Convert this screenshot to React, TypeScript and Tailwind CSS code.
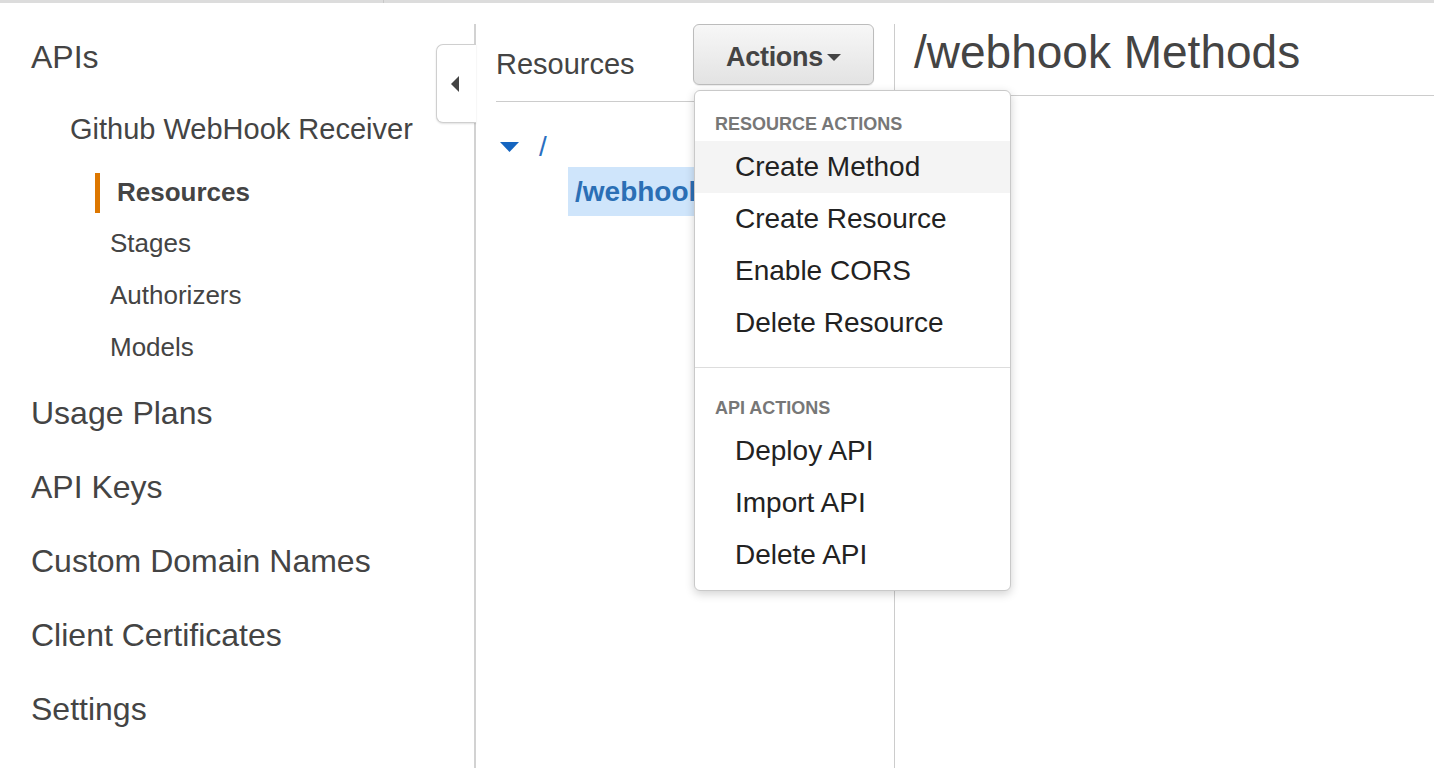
import React from "react";

const font = { fontFamily: '"Liberation Sans", Arial, Helvetica, sans-serif' };

function SubItem({ label }: { label: string }) {
  return (
    <div className="h-[52px] flex items-center pl-[110px] text-[26px] text-[#444]">{label}</div>
  );
}

function MainItem({ label }: { label: string }) {
  return (
    <div className="h-[74px] flex items-center pl-[31px] text-[32px] text-[#444]">{label}</div>
  );
}

function MenuItem({ label, active }: { label: string; active?: boolean }) {
  return (
    <div
      className={`h-[52px] flex items-center pl-[40px] text-[28px] text-[#222] ${
        active ? "bg-[#f4f4f4]" : ""
      }`}
    >
      {label}
    </div>
  );
}

function MenuHeader({ label }: { label: string }) {
  return (
    <div className="h-[34px] flex items-center pl-[20px] text-[18px] font-bold text-[#777]">
      {label}
    </div>
  );
}

export default function App() {
  return (
    <div className="w-[1434px] h-[768px] bg-white overflow-hidden flex flex-col" style={font}>
      <div className="h-[3px] bg-[#dcdcdc] flex">
        <div className="w-[384px] border-r border-[#c8c8c8]" />
      </div>
      <div className="flex flex-1 pt-[21px]">
        {/* Sidebar */}
        <div className="relative w-[476px] border-r-2 border-[#d2d2d2] pt-[6px]">
          <div className="h-[54px] flex items-center pl-[31px] text-[32px] text-[#444]">APIs</div>
          <div className="mt-[22px] h-[48px] flex items-center pl-[70px] text-[29px] text-[#444]">
            Github WebHook Receiver
          </div>
          <div className="mt-[14px] h-[49px] flex items-center pl-[95px]">
            <div className="w-[5px] h-[40px] bg-[#dd7700]" />
            <div className="ml-[17px] text-[26px] font-bold text-[#444]">Resources</div>
          </div>
          <SubItem label="Stages" />
          <SubItem label="Authorizers" />
          <SubItem label="Models" />
          <div className="mt-[3px]">
            <MainItem label="Usage Plans" />
            <MainItem label="API Keys" />
            <MainItem label="Custom Domain Names" />
            <MainItem label="Client Certificates" />
            <MainItem label="Settings" />
          </div>
          {/* collapse tab */}
          <div className="absolute right-[-2px] top-[20px] w-[40px] h-[79px] border border-r-0 border-[#cfcfcf] rounded-l-[7px] bg-white shadow-[0_1px_2px_rgba(0,0,0,0.12)] flex items-center justify-center">
            <svg width="10" height="16" viewBox="0 0 10 16" className="ml-[-3px]">
              <polygon points="9,0 9,16 1,8" fill="#444" />
            </svg>
          </div>
        </div>

        {/* Middle panel */}
        <div className="w-[419px] border-r border-[#cccccc] pl-[20px] pr-[20px]">
          <div className="h-[78px] border-b border-[#cccccc] flex items-start">
            <div className="mt-[23px] leading-[34px] text-[29px] text-[#444]">Resources</div>
            <div className="relative ml-auto">
              <div className="w-[181px] h-[61px] rounded-[6px] border border-[#bcbcbc] bg-gradient-to-b from-[#f7f7f7] to-[#e3e3e3] shadow-[0_1px_1px_rgba(0,0,0,0.08)] flex items-center justify-center pt-[5px]">
                <span className="text-[27px] font-bold text-[#444] tracking-[-0.3px]">Actions</span>
                <svg width="14" height="8" viewBox="0 0 14 8" className="ml-[4px] mt-[2px]">
                  <polygon points="0,0 14,0 7,7" fill="#444" />
                </svg>
              </div>
              {/* dropdown */}
              <div className="absolute z-10 left-[1px] top-[66px] w-[317px] bg-white border border-[#c9c9c9] rounded-[6px] shadow-[0_3px_10px_rgba(0,0,0,0.18)] pt-[16px] pb-[9px]">
                <MenuHeader label="RESOURCE ACTIONS" />
                <MenuItem label="Create Method" active />
                <MenuItem label="Create Resource" />
                <MenuItem label="Enable CORS" />
                <MenuItem label="Delete Resource" />
                <div className="mt-[18px] h-px bg-[#dddddd]" />
                <div className="mt-[23px]">
                  <MenuHeader label="API ACTIONS" />
                </div>
                <MenuItem label="Deploy API" />
                <MenuItem label="Import API" />
                <MenuItem label="Delete API" />
              </div>
            </div>
          </div>
          {/* tree */}
          <div className="pt-[26px]">
            <div className="h-[38px] flex items-center">
              <svg width="19" height="11" viewBox="0 0 19 11" className="ml-[4px]">
                <polygon points="0,0 19,0 9.5,10" fill="#1565c0" />
              </svg>
              <span className="ml-[20px] text-[28px] text-[#2a6fc0]">/</span>
            </div>
            <div className="mt-[1px] ml-[72px] h-[49px] bg-[#cfe5fb] flex items-center pl-[7px] w-[180px] overflow-hidden">
              <span className="text-[28px] font-bold text-[#2b6fb5] whitespace-nowrap">/webhook</span>
            </div>
          </div>
        </div>

        {/* Right panel */}
        <div className="flex-1">
          <div className="h-[72px] border-b border-[#cccccc] pl-[19px] pt-[1px]">
            <div className="leading-[54px] text-[46px] text-[#444]">/webhook Methods</div>
          </div>
        </div>
      </div>
    </div>
  );
}
